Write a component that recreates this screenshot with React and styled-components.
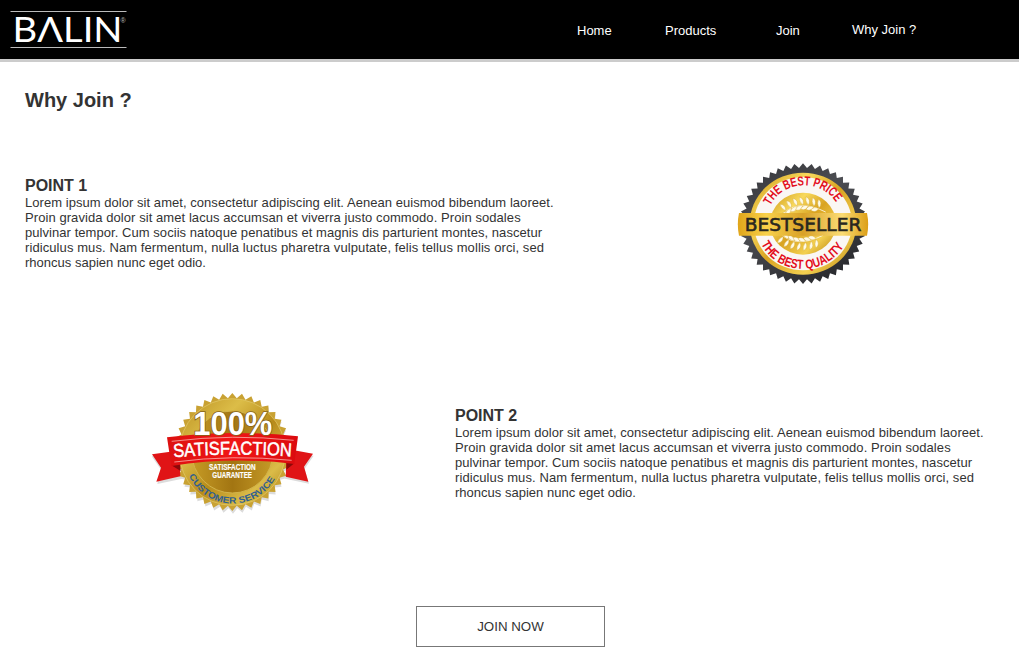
import React from 'react';
import styled, { createGlobalStyle } from 'styled-components';

const GlobalStyle = createGlobalStyle`
  * { box-sizing: border-box; }
  body {
    margin: 0;
    background: #fff;
    color: #333;
    font-family: 'Liberation Sans', Arial, sans-serif;
    font-size: 13px;
    overflow: hidden;
  }
`;

const Page = styled.div`
  height: 651px;
  display: flex;
  flex-direction: column;
`;

const Header = styled.header`
  height: 62px;
  flex: none;
  display: flex;
  background: #000;
  border-bottom: 3px solid #ccc;
`;

const LogoSvg = styled.svg`
  display: block;
  margin: 8px 0 0 8px;
`;

const Nav = styled.nav`
  display: flex;
  align-items: flex-start;
  margin-left: 447px;
`;

const NavLink = styled.a`
  color: #fff;
  line-height: 16px;
  white-space: nowrap;
  width: ${(p) => p.$width}px;
  padding-top: ${(p) => (p.$raised ? 22 : 23)}px;
`;

const Title = styled.h1`
  margin: 24px 0 0 25px;
  height: 28px;
  font-size: 20px;
  line-height: 28px;
`;

const Points = styled.main`
  flex: none;
  height: 492px;
  padding-top: 32px;
`;

const Point = styled.section`
  display: flex;
  align-items: flex-start;
  height: 230px;
  padding-left: ${(p) => p.$indent}px;
`;

const Copy = styled.div`
  width: 545px;
  padding-top: 30px;
`;

const PointTitle = styled.h2`
  margin: 0;
  font-size: 16px;
  line-height: 19px;
`;

const Text = styled.p`
  margin: 0;
  line-height: 15px;
`;

const Line = styled.span`
  display: block;
  white-space: nowrap;
  letter-spacing: ${(p) => p.$tracking}px;
`;

const Badge = styled.svg`
  display: block;
  flex: none;
  margin: ${(p) => p.$margin};
`;

const JoinButton = styled.button`
  align-self: center;
  width: 189px;
  height: 41px;
  margin: 0 0 0 2px;
  padding: 0;
  border: 1px solid #777;
  background: #fff;
  color: #333;
  font: 13.33px 'Liberation Sans', Arial, sans-serif;
`;

const LINES = [
  ['Lorem ipsum dolor sit amet, consectetur adipiscing elit. Aenean euismod bibendum laoreet.', 0.045],
  ['Proin gravida dolor sit amet lacus accumsan et viverra justo commodo. Proin sodales', 0.07],
  ['pulvinar tempor. Cum sociis natoque penatibus et magnis dis parturient montes, nascetur', 0.055],
  ['ridiculus mus. Nam fermentum, nulla luctus pharetra vulputate, felis tellus mollis orci, sed', 0.09],
  ['rhoncus sapien nunc eget odio.', 0.01],
];

const starPoints = (cx, cy, rx, ry, teeth, depth) =>
  Array.from({ length: teeth * 2 }, (_, i) => {
    const a = (i * Math.PI) / teeth - Math.PI / 2;
    const k = i % 2 ? 1 - depth : 1;
    return `${(cx + rx * k * Math.cos(a)).toFixed(1)},${(cy + ry * k * Math.sin(a)).toFixed(1)}`;
  }).join(' ');

const NARROW = "'Liberation Sans Narrow', 'Liberation Sans', sans-serif";

function Logo() {
  return (
    <LogoSvg width="122" height="44" viewBox="8 8 122 44">
      <path d="M10.5 11.5H126.5M10.5 47.5H126.5" stroke="#bbb" strokeWidth="1" />
      <text x="12.5" y="42" fill="#fff" fontFamily="Lato, sans-serif" fontSize="35.5" textLength="110" lengthAdjust="spacingAndGlyphs">BΛLIN</text>
      <text x="120.5" y="22.5" fill="#bbb" fontFamily="'Liberation Sans', sans-serif" fontSize="7">®</text>
    </LogoSvg>
  );
}

const LEAVES = [-58, -41, -24, -7, 10, 27, 42];

function Laurel({ flip }) {
  return (
    <g transform={flip ? 'translate(217 263) scale(1 -1)' : 'translate(225 149)'} fill="#fffbe8" stroke="#cfa12a" strokeWidth="1">
      <path d="M-60 22Q-15 -16 62 22" fill="none" stroke="#fffbe8" strokeWidth="2.5" />
      {LEAVES.map((x) => {
        const y = (x * x) / 190;
        return (
          <g key={x} transform={`translate(${x} ${y}) rotate(${x * 0.4})`}>
            <path d="M0 1Q-12 -12 -8 -24Q8 -16 0 1Z" />
            <path d="M0 3Q-16 -1 -22 14Q-6 20 0 3Z" />
          </g>
        );
      })}
    </g>
  );
}

function BestsellerBadge() {
  return (
    <Badge width="146" height="135" viewBox="0 0 438 405" $margin="9px 0 0 160px">
      <defs>
        <linearGradient id="gold" x1="0" y1="0" x2="1" y2="1">
          <stop offset="0" stopColor="#c9920f" />
          <stop offset=".28" stopColor="#f8d95c" />
          <stop offset=".5" stopColor="#d9a321" />
          <stop offset=".75" stopColor="#f3d050" />
          <stop offset="1" stopColor="#b57d0a" />
        </linearGradient>
        <linearGradient id="goldBand" x1="0" y1="0" x2="1" y2="0">
          <stop offset="0" stopColor="#e0a51a" />
          <stop offset=".22" stopColor="#f8d14a" />
          <stop offset=".5" stopColor="#d9a128" />
          <stop offset=".8" stopColor="#fbdc74" />
          <stop offset="1" stopColor="#dc9f17" />
        </linearGradient>
        <linearGradient id="charcoal" x1="0" y1="0" x2=".6" y2="1">
          <stop offset="0" stopColor="#333438" />
          <stop offset=".45" stopColor="#4c4d52" />
          <stop offset="1" stopColor="#2b2c30" />
        </linearGradient>
        <path id="priceArc" d="M121 152A112 106 0 0 1 325 154" />
        <path id="qualityArc" d="M93 267A140 132 0 0 0 346 265" />
      </defs>
      <polygon points={starPoints(219, 206, 190, 181, 46, 0.075)} fill="url(#charcoal)" />
      <ellipse cx="219" cy="206" rx="160" ry="153" fill="url(#gold)" />
      <ellipse cx="219" cy="206" rx="147" ry="140" fill="#faf7f4" />
      <ellipse cx="219" cy="206" rx="99" ry="93" fill="url(#gold)" />
      <Laurel />
      <Laurel flip />
      <path d="M27 174H411Q418 207 411 242H27Q20 207 27 174Z" fill="url(#goldBand)" />
      <text x="44" y="227" fill="#29271f" stroke="#29271f" strokeWidth="1.8" fontFamily="'DejaVu Sans', sans-serif" fontSize="55" textLength="350" lengthAdjust="spacingAndGlyphs">BESTSELLER</text>
      <g fill="#e30d1c" fontFamily={NARROW} fontWeight="700" fontSize="39">
        <text textLength="238" lengthAdjust="spacingAndGlyphs"><textPath href="#priceArc">THE BEST PRICE</textPath></text>
        <text textLength="300" lengthAdjust="spacingAndGlyphs"><textPath href="#qualityArc">THE BEST QUALITY</textPath></text>
      </g>
    </Badge>
  );
}

function SatisfactionBadge() {
  return (
    <Badge width="175" height="135" viewBox="0 0 525 405" $margin="9px 135px 0 0">
      <defs>
        <linearGradient id="seal" x1="0" y1="0" x2="1" y2="1">
          <stop offset="0" stopColor="#b98e20" />
          <stop offset=".3" stopColor="#dcbd48" />
          <stop offset=".55" stopColor="#b78a1a" />
          <stop offset=".78" stopColor="#dbbc48" />
          <stop offset="1" stopColor="#a67913" />
        </linearGradient>
        <linearGradient id="sealInner" x1="0" y1="0" x2="1" y2="0">
          <stop offset="0" stopColor="#c69b25" />
          <stop offset=".5" stopColor="#a27512" />
          <stop offset="1" stopColor="#c59a27" />
        </linearGradient>
        <linearGradient id="ribbon" x1="0" y1="0" x2="1" y2="0">
          <stop offset="0" stopColor="#dd1010" />
          <stop offset=".5" stopColor="#f01616" />
          <stop offset="1" stopColor="#db0b0e" />
        </linearGradient>
        <path id="wordArc" d="M86 217Q262 201 442 215" />
        <path id="serviceArc" d="M132 272A145 145 0 0 0 399 262" />
      </defs>
      <g fill="#dcdcdc">
        <polygon points={starPoints(264, 208, 174, 178, 38, 0.09)} />
        <path d="M78 210L20 214 48 254 37 297 112 281ZM447 208L506 212 479 251 492 296 420 281Z" />
      </g>
      <polygon points={starPoints(262, 201, 176, 177, 38, 0.085)} fill="#c9a233" />
      <ellipse cx="262" cy="201" rx="159" ry="160" fill="url(#seal)" stroke="#e4cb6c" strokeWidth="2" />
      <ellipse cx="262" cy="201" rx="122" ry="123" fill="url(#sealInner)" stroke="#d2b34b" strokeWidth="3" />
      <path d="M76 200L21 208 48 248 34 290 106 274 104 237ZM447 196L504 206 477 245 490 290 422 275 424 232Z" fill="#e01416" />
      <path d="M79 241L105 237 107 258ZM448 235L424 232 424 254Z" fill="#8d0808" />
      <path d="M66 157Q262 133 459 154L448 237Q262 214 79 243Z" fill="url(#ribbon)" />
      <path d="M80 169Q262 146 446 166M88 231Q262 208 440 226" fill="none" stroke="#ffd0ca" strokeWidth="2" />
      <text x="145" y="151" fill="#fff" stroke="#86631a" strokeWidth="5" paintOrder="stroke" fontFamily={NARROW} fontWeight="700" fontSize="98" textLength="237" lengthAdjust="spacingAndGlyphs">100%</text>
      <text fill="#fff" stroke="#fff" strokeWidth="1.5" fontFamily="'Liberation Sans', sans-serif" fontSize="56" textLength="354" lengthAdjust="spacingAndGlyphs"><textPath href="#wordArc">SATISFACTION</textPath></text>
      <g fill="#fff" stroke="#fff" strokeWidth=".5" fontFamily={NARROW} fontWeight="700" fontSize="25">
        <text x="192" y="255" textLength="140" lengthAdjust="spacingAndGlyphs">SATISFACTION</text>
        <text x="202" y="279" textLength="119" lengthAdjust="spacingAndGlyphs">GUARANTEE</text>
      </g>
      <text fill="#315f91" fontFamily="'Liberation Sans', sans-serif" fontWeight="700" fontSize="27" textLength="318" lengthAdjust="spacingAndGlyphs"><textPath href="#serviceArc">CUSTOMER SERVICE</textPath></text>
    </Badge>
  );
}

function PointCopy({ title }) {
  return (
    <Copy>
      <PointTitle>{title}</PointTitle>
      <Text>
        {LINES.map(([text, tracking]) => (
          <Line key={text} $tracking={tracking}>{text}</Line>
        ))}
      </Text>
    </Copy>
  );
}

export default function App() {
  return (
    <Page>
      <GlobalStyle />
      <Header>
        <Logo />
        <Nav>
          <NavLink $width={88}>Home</NavLink>
          <NavLink $width={111}>Products</NavLink>
          <NavLink $width={76}>Join</NavLink>
          <NavLink $width={90} $raised>Why Join ?</NavLink>
        </Nav>
      </Header>
      <Title>Why Join ?</Title>
      <Points>
        <Point $indent={25}>
          <PointCopy title="POINT 1" />
          <BestsellerBadge />
        </Point>
        <Point $indent={145}>
          <SatisfactionBadge />
          <PointCopy title="POINT 2" />
        </Point>
      </Points>
      <JoinButton>JOIN NOW</JoinButton>
    </Page>
  );
}
